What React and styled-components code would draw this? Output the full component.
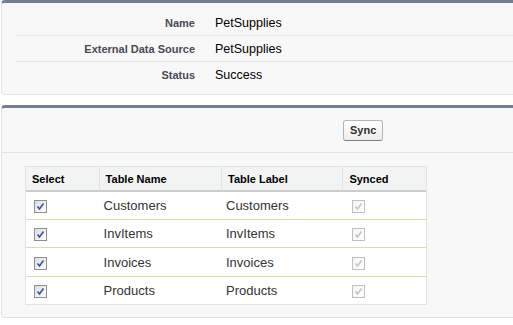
import styled, { createGlobalStyle } from 'styled-components';

const GlobalStyle = createGlobalStyle`
    body {
        margin: 0;
        overflow: hidden;
        background: #fff;
        font-family: Arial, "Liberation Sans", sans-serif;
        font-size: 12px;
    }
`;

const Page = styled.div`
    width: 530px;
    padding: 0 0 0 1px;
    display: flex;
    flex-direction: column;
    gap: 10px;
`;

const Block = styled.div`
    background: #f8f8f8;
    border: 1px solid #e0e3e5;
    border-top: 3px solid #747e96;
    border-radius: 4px;
`;

const DetailList = styled.div`
    padding: 7px 0 6px 13px;
`;

const DetailRow = styled.div`
    display: flex;
    align-items: center;
    height: 26px;
    border-bottom: 1px solid ${(p) => (p.last ? 'transparent' : '#e6e6e6')};
    box-sizing: border-box;
`;

const Label = styled.div`
    width: 180px;
    text-align: right;
    font-weight: bold;
    font-size: 11px;
    color: #4a4a56;
`;

const Value = styled.div`
    padding-left: 20px;
    color: #000;
    font-size: 12.5px;
`;

const ButtonBar = styled.div`
    display: flex;
    align-items: center;
    height: 44px;
    border-bottom: 1px solid #e0e3e5;
    padding-left: 341px;
`;

const Button = styled.button`
    font-family: Arial, "Liberation Sans", sans-serif;
    font-weight: bold;
    font-size: 11px;
    color: #333;
    height: 21px;
    padding: 0 6px;
    border: 1px solid #b5b5b5;
    border-bottom-color: #7f7f7f;
    border-radius: 3px;
    background: linear-gradient(#fff, #ededed);
    cursor: pointer;
`;

const TableWrap = styled.div`
    padding: 13px 0 12px 23px;
`;

const Table = styled.table`
    width: 402px;
    border-collapse: separate;
    border-spacing: 0;
    background: #fff;
    border: 1px solid #e0e3e5;
`;

const Th = styled.th`
    width: ${(p) => p.w - 7}px;
    height: 23px;
    padding: 0 0 0 6px;
    text-align: left;
    font-size: 11px;
    font-weight: bold;
    color: #000;
    background: #f2f3f3;
    border-left: 1px solid #e0e3e5;
    border-bottom: 2px solid #cccccc;
    &:first-child { border-left: none; width: ${(p) => p.w - 6}px; }
`;

const Td = styled.td`
    height: ${(p) => p.h}px;
    padding: 0 0 0 ${(p) => p.pad || 5}px;
    font-size: 13px;
    color: #333;
    border-bottom: ${(p) => (p.last ? 'none' : '1px solid #e3daa8')};
`;

const Box = styled.span`
    display: inline-flex;
    width: 13px;
    height: 13px;
    vertical-align: middle;
`;

function CheckBox({ disabled }) {
    const edge = disabled ? '#c0c0c0' : '#8f8f8f';
    const tick = disabled ? '#c4c4c4' : '#3b4fa0';
    return (
        <Box>
            <svg width="13" height="13" viewBox="0 0 13 13">
                <defs>
                    <linearGradient id={disabled ? 'gd' : 'ge'} x1="0" y1="0" x2="1" y2="1">
                        <stop offset="0" stopColor={disabled ? '#f4f4f4' : '#dcdcdc'} />
                        <stop offset="1" stopColor="#ffffff" />
                    </linearGradient>
                </defs>
                <rect x="0.5" y="0.5" width="12" height="12" fill={`url(#${disabled ? 'gd' : 'ge'})`} stroke={edge} />
                <path d="M3.5 6.5 L5.5 9 L9.5 3.5" fill="none" stroke={tick} strokeWidth="1.6" />
            </svg>
        </Box>
    );
}

const details = [
    ['Name', 'PetSupplies'],
    ['External Data Source', 'PetSupplies'],
    ['Status', 'Success'],
];

// row heights (without the 1px border) as read from the reference
const tables = [
    { name: 'Customers', h: 27 },
    { name: 'InvItems', h: 27 },
    { name: 'Invoices', h: 28 },
    { name: 'Products', h: 27 },
];

export default function App() {
    return (
        <>
            <GlobalStyle />
            <Page>
                <Block>
                    <DetailList>
                        {details.map(([label, value], i) => (
                            <DetailRow key={label} last={i === details.length - 1}>
                                <Label>{label}</Label>
                                <Value>{value}</Value>
                            </DetailRow>
                        ))}
                    </DetailList>
                </Block>
                <Block>
                    <ButtonBar>
                        <Button>Sync</Button>
                    </ButtonBar>
                    <TableWrap>
                        <Table>
                            <thead>
                                <tr>
                                    <Th w={73}>Select</Th>
                                    <Th w={123}>Table Name</Th>
                                    <Th w={122}>Table Label</Th>
                                    <Th w={84}>Synced</Th>
                                </tr>
                            </thead>
                            <tbody>
                                {tables.map(({ name, h }, i) => {
                                    const last = i === tables.length - 1;
                                    return (
                                        <tr key={name}>
                                            <Td h={h} last={last} pad={8}><CheckBox /></Td>
                                            <Td h={h} last={last}>{name}</Td>
                                            <Td h={h} last={last}>{name}</Td>
                                            <Td h={h} last={last} pad={10}><CheckBox disabled /></Td>
                                        </tr>
                                    );
                                })}
                            </tbody>
                        </Table>
                    </TableWrap>
                </Block>
            </Page>
        </>
    );
}
